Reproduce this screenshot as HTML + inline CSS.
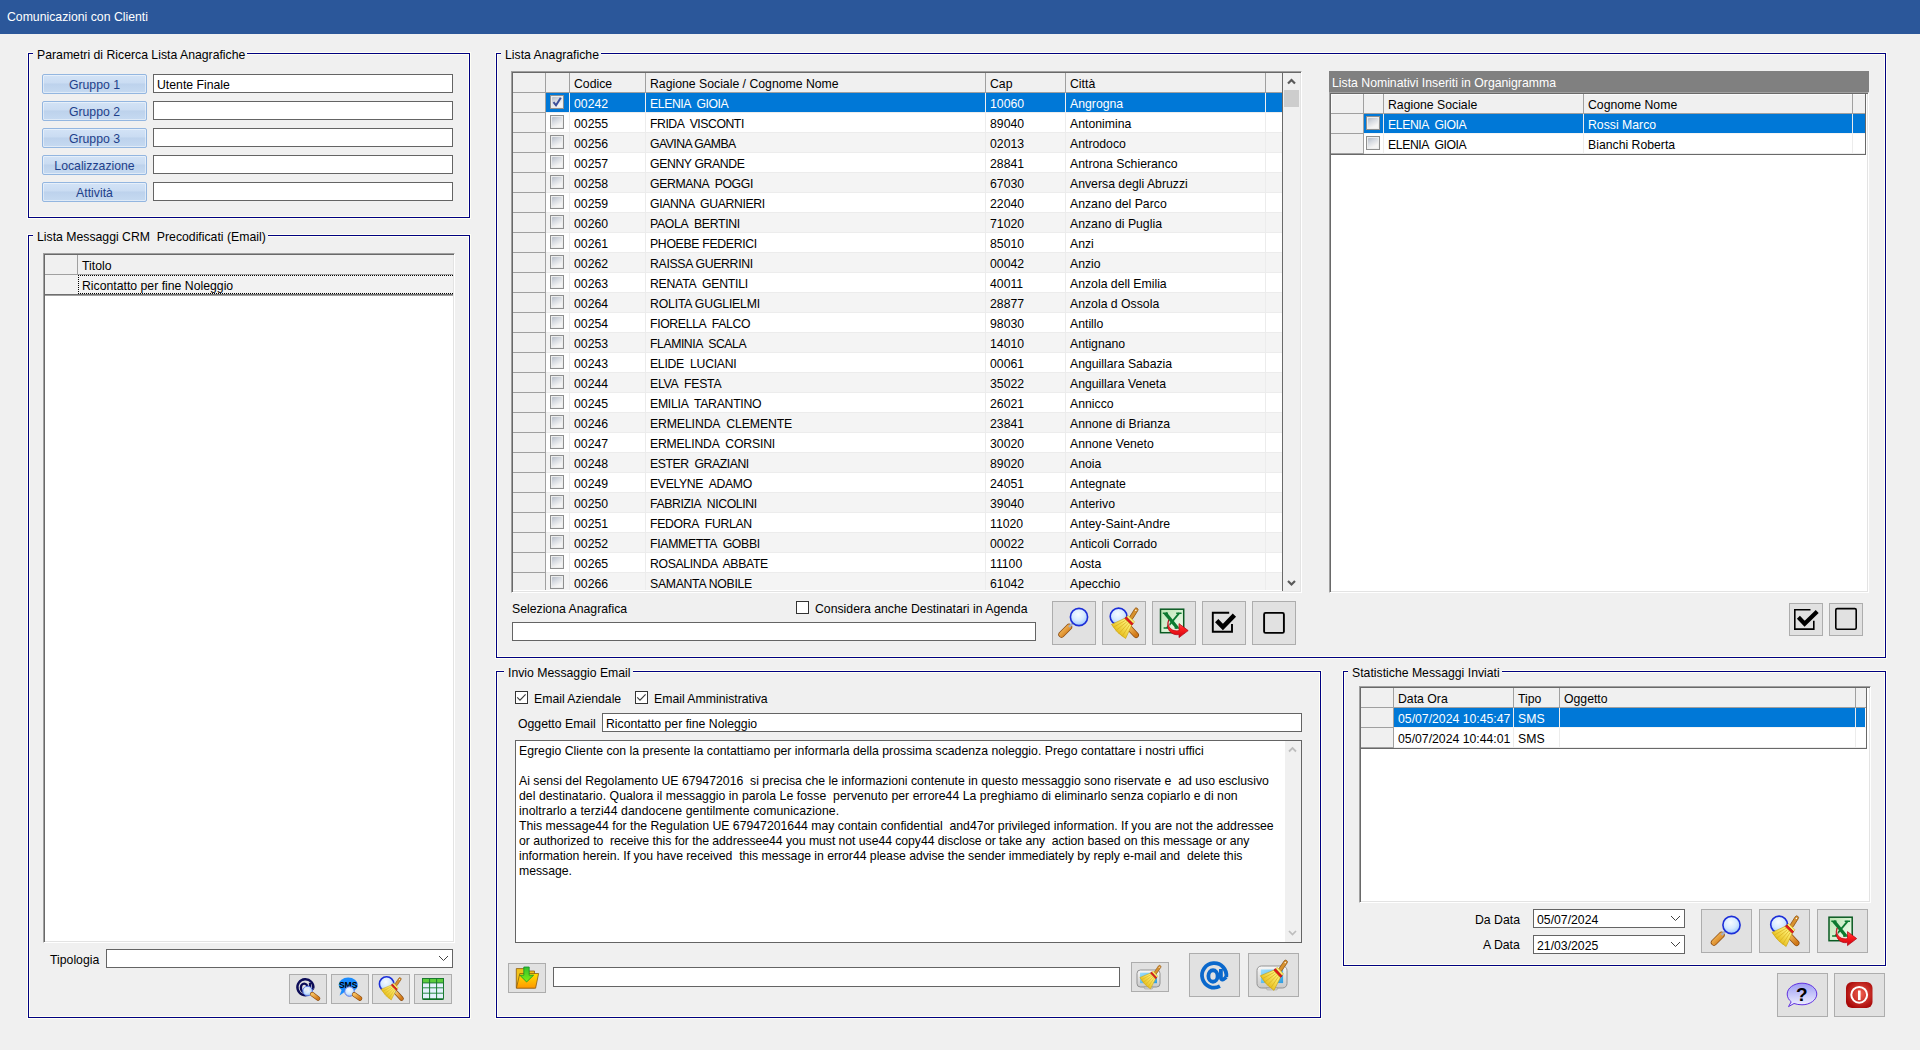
<!DOCTYPE html><html><head><meta charset="utf-8"><style>
html,body{margin:0;padding:0}
body{width:1920px;height:1050px;background:#f0f0f0;position:relative;overflow:hidden;font-family:"Liberation Sans",sans-serif;font-size:12.25px}
.a{position:absolute;box-sizing:border-box}
svg.a{overflow:visible}
.t{position:absolute;white-space:pre;line-height:14px;font-size:12.25px}
.grp{position:absolute;box-sizing:border-box;border:1px solid #000080;box-shadow:0 0 0 1px #fffff6,inset 0 0 0 1px #fffff6}
.gt{position:absolute;background:#f0f0f0;padding:0 2px 0 4px;line-height:14px;white-space:pre;color:#000}
.tb{position:absolute;box-sizing:border-box;background:#fff;border:1px solid #646464}
.btn{position:absolute;box-sizing:border-box;background:#e1e1e1;border:1px solid #adadad}
.bb{position:absolute;box-sizing:border-box;border:1px solid #93b6e0;border-radius:2px;box-shadow:inset 0 0 0 1px rgba(255,255,255,0.45);background:linear-gradient(#d3e3f6 0,#cadcf2 44%,#bdd2ec 50%,#c6daf1 100%);color:#1e3f8a;text-align:center;line-height:20px;font-size:12.25px}
.btn svg{position:absolute}
</style></head><body><svg width="0" height="0" style="position:absolute">
<defs>
<radialGradient id="lens" cx="0.45" cy="0.35" r="0.65"><stop offset="0" stop-color="#f6fbff"/><stop offset="0.55" stop-color="#d6eaff"/><stop offset="1" stop-color="#9cc8ff"/></radialGradient>
<linearGradient id="hand" x1="0" y1="0" x2="1" y2="1"><stop offset="0" stop-color="#f7c060"/><stop offset="1" stop-color="#d07818"/></linearGradient>
<linearGradient id="bristle" x1="0" y1="0" x2="0" y2="1"><stop offset="0" stop-color="#fff27a"/><stop offset="1" stop-color="#e8c020"/></linearGradient>
<linearGradient id="xls" x1="0" y1="0" x2="1" y2="1"><stop offset="0" stop-color="#b8e4b0"/><stop offset="1" stop-color="#f6fff4"/></linearGradient>
<linearGradient id="redarr" x1="0" y1="0" x2="0" y2="1"><stop offset="0" stop-color="#ff8080"/><stop offset="0.5" stop-color="#ff2020"/><stop offset="1" stop-color="#d00010"/></linearGradient>
<linearGradient id="folder" x1="0" y1="0" x2="0" y2="1"><stop offset="0" stop-color="#ffe000"/><stop offset="1" stop-color="#ff9800"/></linearGradient>
<linearGradient id="garr" x1="0" y1="0" x2="0" y2="1"><stop offset="0" stop-color="#30c030"/><stop offset="1" stop-color="#80f010"/></linearGradient>
<linearGradient id="bub" x1="0" y1="0" x2="0" y2="1"><stop offset="0" stop-color="#9c9cf4"/><stop offset="1" stop-color="#f4f4ff"/></linearGradient>
<radialGradient id="pwr" cx="0.55" cy="0.45" r="0.6"><stop offset="0" stop-color="#f06050"/><stop offset="1" stop-color="#a80808"/></radialGradient>
<linearGradient id="mon" x1="0" y1="0" x2="0" y2="1"><stop offset="0" stop-color="#f8f8f8"/><stop offset="1" stop-color="#c8c8c8"/></linearGradient>
<linearGradient id="scr" x1="0" y1="0" x2="1" y2="1"><stop offset="0" stop-color="#9ee0ff"/><stop offset="1" stop-color="#2c9ce0"/></linearGradient>
</defs></svg><div class="a" style="left:0px;top:0px;width:1920px;height:34px;background:#2b579a"></div><div class="t" style="left:7px;top:10px;color:#fff;">Comunicazioni con Clienti</div><div class="grp" style="left:28px;top:53px;width:442px;height:165px"></div><div class="gt" style="left:33px;top:48px">Parametri di Ricerca Lista Anagrafiche</div><div class="bb" style="left:42px;top:74px;width:105px;height:20px">Gruppo 1</div><div class="tb" style="left:153px;top:74px;width:300px;height:19px"></div><div class="bb" style="left:42px;top:101px;width:105px;height:20px">Gruppo 2</div><div class="tb" style="left:153px;top:101px;width:300px;height:19px"></div><div class="bb" style="left:42px;top:128px;width:105px;height:20px">Gruppo 3</div><div class="tb" style="left:153px;top:128px;width:300px;height:19px"></div><div class="bb" style="left:42px;top:155px;width:105px;height:20px">Localizzazione</div><div class="tb" style="left:153px;top:155px;width:300px;height:19px"></div><div class="bb" style="left:42px;top:182px;width:105px;height:20px">Attività</div><div class="tb" style="left:153px;top:182px;width:300px;height:19px"></div><div class="t" style="left:157px;top:78px;color:#000;">Utente Finale</div><div class="grp" style="left:28px;top:235px;width:442px;height:783px"></div><div class="gt" style="left:33px;top:230px">Lista Messaggi CRM  Precodificati (Email)</div><div class="a" style="left:43px;top:253px;width:412px;height:690px;background:#fff;border-style:solid;border-width:1px;border-color:#a0a0a0 #fff #fff #a0a0a0;box-shadow:inset 1px 1px 0 #696969,inset -1px -1px 0 #e3e3e3"></div><div class="a" style="left:45px;top:255px;width:408px;height:20px;background:#f0f0f0"></div><div class="a" style="left:45px;top:274px;width:408px;height:1px;background:#a0a0a0"></div><div class="a" style="left:77px;top:255px;width:1px;height:40px;background:#a0a0a0"></div><div class="t" style="left:82px;top:259px;color:#000;">Titolo</div><div class="a" style="left:45px;top:275px;width:408px;height:19px;background:#f2f2f2"></div><div class="a" style="left:45px;top:294px;width:408px;height:1px;background:#6f6f6f"></div><div class="a" style="left:45px;top:295px;width:408px;height:1px;background:#a0a0a0"></div><div class="a" style="left:78px;top:275px;width:375px;height:19px;border:1px dotted #000;border-right:none;box-sizing:border-box"></div><div class="t" style="left:82px;top:279px;color:#000;">Ricontatto per fine Noleggio</div><div class="t" style="left:50px;top:953px;color:#000;">Tipologia</div><div class="tb" style="left:106px;top:949px;width:347px;height:19px"></div><svg class="a" style="left:437.5px;top:954.75px" width="11" height="6.5" viewBox="-1 -1 11 6.5"><path d="M0 0 L4.5 4.5 L9 0" fill="none" stroke="#404040" stroke-width="1.0"/></svg><div class="grp" style="left:496px;top:53px;width:1390px;height:605px"></div><div class="gt" style="left:501px;top:48px">Lista Anagrafiche</div><div class="a" style="left:511px;top:71px;width:791px;height:522px;background:#fff;border-style:solid;border-width:1px;border-color:#a0a0a0 #fff #fff #a0a0a0;box-shadow:inset 1px 1px 0 #696969,inset -1px -1px 0 #e3e3e3"></div><div class="a" style="left:513px;top:73px;width:770px;height:20px;background:#f0f0f0"></div><div class="a" style="left:513px;top:92px;width:769px;height:1px;background:#a0a0a0"></div><div class="a" style="left:545px;top:73px;width:1px;height:19px;background:#a0a0a0"></div><div class="a" style="left:569px;top:73px;width:1px;height:19px;background:#a0a0a0"></div><div class="a" style="left:645px;top:73px;width:1px;height:19px;background:#a0a0a0"></div><div class="a" style="left:985px;top:73px;width:1px;height:19px;background:#a0a0a0"></div><div class="a" style="left:1065px;top:73px;width:1px;height:19px;background:#a0a0a0"></div><div class="a" style="left:1265px;top:73px;width:1px;height:19px;background:#a0a0a0"></div><div class="t" style="left:574px;top:77px;color:#000;">Codice</div><div class="t" style="left:650px;top:77px;color:#000;">Ragione Sociale / Cognome Nome</div><div class="t" style="left:990px;top:77px;color:#000;">Cap</div><div class="t" style="left:1070px;top:77px;color:#000;">Città</div><div class="a" style="left:0;top:0;width:1920px;height:590px;overflow:hidden"><div class="a" style="left:546px;top:93px;width:736px;height:19px;background:#0078d7"></div><div class="a" style="left:546px;top:112px;width:736px;height:1px;background:#ececec"></div><div class="a" style="left:569px;top:93px;width:1px;height:19px;background:#f0f0f0"></div><div class="a" style="left:645px;top:93px;width:1px;height:19px;background:#f0f0f0"></div><div class="a" style="left:985px;top:93px;width:1px;height:19px;background:#f0f0f0"></div><div class="a" style="left:1065px;top:93px;width:1px;height:19px;background:#f0f0f0"></div><div class="a" style="left:1265px;top:93px;width:1px;height:19px;background:#f0f0f0"></div><div class="a" style="left:513px;top:93px;width:32px;height:19px;background:#f0f0f0"></div><div class="a" style="left:513px;top:112px;width:33px;height:1px;background:#a0a0a0"></div><div class="a" style="left:550px;top:95px;width:14px;height:14px;border:1px solid #8e8f8f;background:#eceded"></div><div class="a" style="left:552px;top:97px;width:10px;height:10px;border-radius:1px;background:linear-gradient(150deg,#b6bdc9 0,#d9dde3 40%,#f3f3f3 75%,#f6f6f6 100%)"></div><svg class="a" style="left:550px;top:95px" width="14" height="14" viewBox="0 0 14 14"><path d="M3.5 7.2 L6 10.3 L10.8 2.8" fill="none" stroke="#3c4f9a" stroke-width="2"/></svg><div class="t" style="left:574px;top:97px;color:#fff;">00242</div><div class="t" style="left:650px;top:97px;color:#fff;letter-spacing:-0.413px;">ELENIA  GIOIA</div><div class="t" style="left:990px;top:97px;color:#fff;">10060</div><div class="t" style="left:1070px;top:97px;color:#fff;">Angrogna</div><div class="a" style="left:546px;top:113px;width:736px;height:19px;background:#ffffff"></div><div class="a" style="left:546px;top:132px;width:736px;height:1px;background:#ececec"></div><div class="a" style="left:569px;top:113px;width:1px;height:19px;background:#ececec"></div><div class="a" style="left:645px;top:113px;width:1px;height:19px;background:#ececec"></div><div class="a" style="left:985px;top:113px;width:1px;height:19px;background:#ececec"></div><div class="a" style="left:1065px;top:113px;width:1px;height:19px;background:#ececec"></div><div class="a" style="left:1265px;top:113px;width:1px;height:19px;background:#ececec"></div><div class="a" style="left:513px;top:113px;width:32px;height:19px;background:#f0f0f0"></div><div class="a" style="left:513px;top:132px;width:33px;height:1px;background:#a0a0a0"></div><div class="a" style="left:550px;top:115px;width:14px;height:14px;border:1px solid #8e8f8f;background:#eceded"></div><div class="a" style="left:552px;top:117px;width:10px;height:10px;border-radius:1px;background:linear-gradient(150deg,#b6bdc9 0,#d9dde3 40%,#f3f3f3 75%,#f6f6f6 100%)"></div><div class="t" style="left:574px;top:117px;color:#000;">00255</div><div class="t" style="left:650px;top:117px;color:#000;letter-spacing:-0.460px;">FRIDA  VISCONTI</div><div class="t" style="left:990px;top:117px;color:#000;">89040</div><div class="t" style="left:1070px;top:117px;color:#000;">Antonimina</div><div class="a" style="left:546px;top:133px;width:736px;height:19px;background:#f4f4f4"></div><div class="a" style="left:546px;top:152px;width:736px;height:1px;background:#ececec"></div><div class="a" style="left:569px;top:133px;width:1px;height:19px;background:#ececec"></div><div class="a" style="left:645px;top:133px;width:1px;height:19px;background:#ececec"></div><div class="a" style="left:985px;top:133px;width:1px;height:19px;background:#ececec"></div><div class="a" style="left:1065px;top:133px;width:1px;height:19px;background:#ececec"></div><div class="a" style="left:1265px;top:133px;width:1px;height:19px;background:#ececec"></div><div class="a" style="left:513px;top:133px;width:32px;height:19px;background:#f0f0f0"></div><div class="a" style="left:513px;top:152px;width:33px;height:1px;background:#a0a0a0"></div><div class="a" style="left:550px;top:135px;width:14px;height:14px;border:1px solid #8e8f8f;background:#eceded"></div><div class="a" style="left:552px;top:137px;width:10px;height:10px;border-radius:1px;background:linear-gradient(150deg,#b6bdc9 0,#d9dde3 40%,#f3f3f3 75%,#f6f6f6 100%)"></div><div class="t" style="left:574px;top:137px;color:#000;">00256</div><div class="t" style="left:650px;top:137px;color:#000;letter-spacing:-0.551px;">GAVINA GAMBA</div><div class="t" style="left:990px;top:137px;color:#000;">02013</div><div class="t" style="left:1070px;top:137px;color:#000;">Antrodoco</div><div class="a" style="left:546px;top:153px;width:736px;height:19px;background:#ffffff"></div><div class="a" style="left:546px;top:172px;width:736px;height:1px;background:#ececec"></div><div class="a" style="left:569px;top:153px;width:1px;height:19px;background:#ececec"></div><div class="a" style="left:645px;top:153px;width:1px;height:19px;background:#ececec"></div><div class="a" style="left:985px;top:153px;width:1px;height:19px;background:#ececec"></div><div class="a" style="left:1065px;top:153px;width:1px;height:19px;background:#ececec"></div><div class="a" style="left:1265px;top:153px;width:1px;height:19px;background:#ececec"></div><div class="a" style="left:513px;top:153px;width:32px;height:19px;background:#f0f0f0"></div><div class="a" style="left:513px;top:172px;width:33px;height:1px;background:#a0a0a0"></div><div class="a" style="left:550px;top:155px;width:14px;height:14px;border:1px solid #8e8f8f;background:#eceded"></div><div class="a" style="left:552px;top:157px;width:10px;height:10px;border-radius:1px;background:linear-gradient(150deg,#b6bdc9 0,#d9dde3 40%,#f3f3f3 75%,#f6f6f6 100%)"></div><div class="t" style="left:574px;top:157px;color:#000;">00257</div><div class="t" style="left:650px;top:157px;color:#000;letter-spacing:-0.387px;">GENNY GRANDE</div><div class="t" style="left:990px;top:157px;color:#000;">28841</div><div class="t" style="left:1070px;top:157px;color:#000;">Antrona Schieranco</div><div class="a" style="left:546px;top:173px;width:736px;height:19px;background:#f4f4f4"></div><div class="a" style="left:546px;top:192px;width:736px;height:1px;background:#ececec"></div><div class="a" style="left:569px;top:173px;width:1px;height:19px;background:#ececec"></div><div class="a" style="left:645px;top:173px;width:1px;height:19px;background:#ececec"></div><div class="a" style="left:985px;top:173px;width:1px;height:19px;background:#ececec"></div><div class="a" style="left:1065px;top:173px;width:1px;height:19px;background:#ececec"></div><div class="a" style="left:1265px;top:173px;width:1px;height:19px;background:#ececec"></div><div class="a" style="left:513px;top:173px;width:32px;height:19px;background:#f0f0f0"></div><div class="a" style="left:513px;top:192px;width:33px;height:1px;background:#a0a0a0"></div><div class="a" style="left:550px;top:175px;width:14px;height:14px;border:1px solid #8e8f8f;background:#eceded"></div><div class="a" style="left:552px;top:177px;width:10px;height:10px;border-radius:1px;background:linear-gradient(150deg,#b6bdc9 0,#d9dde3 40%,#f3f3f3 75%,#f6f6f6 100%)"></div><div class="t" style="left:574px;top:177px;color:#000;">00258</div><div class="t" style="left:650px;top:177px;color:#000;letter-spacing:-0.380px;">GERMANA  POGGI</div><div class="t" style="left:990px;top:177px;color:#000;">67030</div><div class="t" style="left:1070px;top:177px;color:#000;">Anversa degli Abruzzi</div><div class="a" style="left:546px;top:193px;width:736px;height:19px;background:#ffffff"></div><div class="a" style="left:546px;top:212px;width:736px;height:1px;background:#ececec"></div><div class="a" style="left:569px;top:193px;width:1px;height:19px;background:#ececec"></div><div class="a" style="left:645px;top:193px;width:1px;height:19px;background:#ececec"></div><div class="a" style="left:985px;top:193px;width:1px;height:19px;background:#ececec"></div><div class="a" style="left:1065px;top:193px;width:1px;height:19px;background:#ececec"></div><div class="a" style="left:1265px;top:193px;width:1px;height:19px;background:#ececec"></div><div class="a" style="left:513px;top:193px;width:32px;height:19px;background:#f0f0f0"></div><div class="a" style="left:513px;top:212px;width:33px;height:1px;background:#a0a0a0"></div><div class="a" style="left:550px;top:195px;width:14px;height:14px;border:1px solid #8e8f8f;background:#eceded"></div><div class="a" style="left:552px;top:197px;width:10px;height:10px;border-radius:1px;background:linear-gradient(150deg,#b6bdc9 0,#d9dde3 40%,#f3f3f3 75%,#f6f6f6 100%)"></div><div class="t" style="left:574px;top:197px;color:#000;">00259</div><div class="t" style="left:650px;top:197px;color:#000;letter-spacing:-0.373px;">GIANNA  GUARNIERI</div><div class="t" style="left:990px;top:197px;color:#000;">22040</div><div class="t" style="left:1070px;top:197px;color:#000;">Anzano del Parco</div><div class="a" style="left:546px;top:213px;width:736px;height:19px;background:#f4f4f4"></div><div class="a" style="left:546px;top:232px;width:736px;height:1px;background:#ececec"></div><div class="a" style="left:569px;top:213px;width:1px;height:19px;background:#ececec"></div><div class="a" style="left:645px;top:213px;width:1px;height:19px;background:#ececec"></div><div class="a" style="left:985px;top:213px;width:1px;height:19px;background:#ececec"></div><div class="a" style="left:1065px;top:213px;width:1px;height:19px;background:#ececec"></div><div class="a" style="left:1265px;top:213px;width:1px;height:19px;background:#ececec"></div><div class="a" style="left:513px;top:213px;width:32px;height:19px;background:#f0f0f0"></div><div class="a" style="left:513px;top:232px;width:33px;height:1px;background:#a0a0a0"></div><div class="a" style="left:550px;top:215px;width:14px;height:14px;border:1px solid #8e8f8f;background:#eceded"></div><div class="a" style="left:552px;top:217px;width:10px;height:10px;border-radius:1px;background:linear-gradient(150deg,#b6bdc9 0,#d9dde3 40%,#f3f3f3 75%,#f6f6f6 100%)"></div><div class="t" style="left:574px;top:217px;color:#000;">00260</div><div class="t" style="left:650px;top:217px;color:#000;letter-spacing:-0.307px;">PAOLA  BERTINI</div><div class="t" style="left:990px;top:217px;color:#000;">71020</div><div class="t" style="left:1070px;top:217px;color:#000;">Anzano di Puglia</div><div class="a" style="left:546px;top:233px;width:736px;height:19px;background:#ffffff"></div><div class="a" style="left:546px;top:252px;width:736px;height:1px;background:#ececec"></div><div class="a" style="left:569px;top:233px;width:1px;height:19px;background:#ececec"></div><div class="a" style="left:645px;top:233px;width:1px;height:19px;background:#ececec"></div><div class="a" style="left:985px;top:233px;width:1px;height:19px;background:#ececec"></div><div class="a" style="left:1065px;top:233px;width:1px;height:19px;background:#ececec"></div><div class="a" style="left:1265px;top:233px;width:1px;height:19px;background:#ececec"></div><div class="a" style="left:513px;top:233px;width:32px;height:19px;background:#f0f0f0"></div><div class="a" style="left:513px;top:252px;width:33px;height:1px;background:#a0a0a0"></div><div class="a" style="left:550px;top:235px;width:14px;height:14px;border:1px solid #8e8f8f;background:#eceded"></div><div class="a" style="left:552px;top:237px;width:10px;height:10px;border-radius:1px;background:linear-gradient(150deg,#b6bdc9 0,#d9dde3 40%,#f3f3f3 75%,#f6f6f6 100%)"></div><div class="t" style="left:574px;top:237px;color:#000;">00261</div><div class="t" style="left:650px;top:237px;color:#000;letter-spacing:-0.317px;">PHOEBE FEDERICI</div><div class="t" style="left:990px;top:237px;color:#000;">85010</div><div class="t" style="left:1070px;top:237px;color:#000;">Anzi</div><div class="a" style="left:546px;top:253px;width:736px;height:19px;background:#f4f4f4"></div><div class="a" style="left:546px;top:272px;width:736px;height:1px;background:#ececec"></div><div class="a" style="left:569px;top:253px;width:1px;height:19px;background:#ececec"></div><div class="a" style="left:645px;top:253px;width:1px;height:19px;background:#ececec"></div><div class="a" style="left:985px;top:253px;width:1px;height:19px;background:#ececec"></div><div class="a" style="left:1065px;top:253px;width:1px;height:19px;background:#ececec"></div><div class="a" style="left:1265px;top:253px;width:1px;height:19px;background:#ececec"></div><div class="a" style="left:513px;top:253px;width:32px;height:19px;background:#f0f0f0"></div><div class="a" style="left:513px;top:272px;width:33px;height:1px;background:#a0a0a0"></div><div class="a" style="left:550px;top:255px;width:14px;height:14px;border:1px solid #8e8f8f;background:#eceded"></div><div class="a" style="left:552px;top:257px;width:10px;height:10px;border-radius:1px;background:linear-gradient(150deg,#b6bdc9 0,#d9dde3 40%,#f3f3f3 75%,#f6f6f6 100%)"></div><div class="t" style="left:574px;top:257px;color:#000;">00262</div><div class="t" style="left:650px;top:257px;color:#000;letter-spacing:-0.312px;">RAISSA GUERRINI</div><div class="t" style="left:990px;top:257px;color:#000;">00042</div><div class="t" style="left:1070px;top:257px;color:#000;">Anzio</div><div class="a" style="left:546px;top:273px;width:736px;height:19px;background:#ffffff"></div><div class="a" style="left:546px;top:292px;width:736px;height:1px;background:#ececec"></div><div class="a" style="left:569px;top:273px;width:1px;height:19px;background:#ececec"></div><div class="a" style="left:645px;top:273px;width:1px;height:19px;background:#ececec"></div><div class="a" style="left:985px;top:273px;width:1px;height:19px;background:#ececec"></div><div class="a" style="left:1065px;top:273px;width:1px;height:19px;background:#ececec"></div><div class="a" style="left:1265px;top:273px;width:1px;height:19px;background:#ececec"></div><div class="a" style="left:513px;top:273px;width:32px;height:19px;background:#f0f0f0"></div><div class="a" style="left:513px;top:292px;width:33px;height:1px;background:#a0a0a0"></div><div class="a" style="left:550px;top:275px;width:14px;height:14px;border:1px solid #8e8f8f;background:#eceded"></div><div class="a" style="left:552px;top:277px;width:10px;height:10px;border-radius:1px;background:linear-gradient(150deg,#b6bdc9 0,#d9dde3 40%,#f3f3f3 75%,#f6f6f6 100%)"></div><div class="t" style="left:574px;top:277px;color:#000;">00263</div><div class="t" style="left:650px;top:277px;color:#000;letter-spacing:-0.247px;">RENATA  GENTILI</div><div class="t" style="left:990px;top:277px;color:#000;">40011</div><div class="t" style="left:1070px;top:277px;color:#000;">Anzola dell Emilia</div><div class="a" style="left:546px;top:293px;width:736px;height:19px;background:#f4f4f4"></div><div class="a" style="left:546px;top:312px;width:736px;height:1px;background:#ececec"></div><div class="a" style="left:569px;top:293px;width:1px;height:19px;background:#ececec"></div><div class="a" style="left:645px;top:293px;width:1px;height:19px;background:#ececec"></div><div class="a" style="left:985px;top:293px;width:1px;height:19px;background:#ececec"></div><div class="a" style="left:1065px;top:293px;width:1px;height:19px;background:#ececec"></div><div class="a" style="left:1265px;top:293px;width:1px;height:19px;background:#ececec"></div><div class="a" style="left:513px;top:293px;width:32px;height:19px;background:#f0f0f0"></div><div class="a" style="left:513px;top:312px;width:33px;height:1px;background:#a0a0a0"></div><div class="a" style="left:550px;top:295px;width:14px;height:14px;border:1px solid #8e8f8f;background:#eceded"></div><div class="a" style="left:552px;top:297px;width:10px;height:10px;border-radius:1px;background:linear-gradient(150deg,#b6bdc9 0,#d9dde3 40%,#f3f3f3 75%,#f6f6f6 100%)"></div><div class="t" style="left:574px;top:297px;color:#000;">00264</div><div class="t" style="left:650px;top:297px;color:#000;letter-spacing:-0.172px;">ROLITA GUGLIELMI</div><div class="t" style="left:990px;top:297px;color:#000;">28877</div><div class="t" style="left:1070px;top:297px;color:#000;">Anzola d Ossola</div><div class="a" style="left:546px;top:313px;width:736px;height:19px;background:#ffffff"></div><div class="a" style="left:546px;top:332px;width:736px;height:1px;background:#ececec"></div><div class="a" style="left:569px;top:313px;width:1px;height:19px;background:#ececec"></div><div class="a" style="left:645px;top:313px;width:1px;height:19px;background:#ececec"></div><div class="a" style="left:985px;top:313px;width:1px;height:19px;background:#ececec"></div><div class="a" style="left:1065px;top:313px;width:1px;height:19px;background:#ececec"></div><div class="a" style="left:1265px;top:313px;width:1px;height:19px;background:#ececec"></div><div class="a" style="left:513px;top:313px;width:32px;height:19px;background:#f0f0f0"></div><div class="a" style="left:513px;top:332px;width:33px;height:1px;background:#a0a0a0"></div><div class="a" style="left:550px;top:315px;width:14px;height:14px;border:1px solid #8e8f8f;background:#eceded"></div><div class="a" style="left:552px;top:317px;width:10px;height:10px;border-radius:1px;background:linear-gradient(150deg,#b6bdc9 0,#d9dde3 40%,#f3f3f3 75%,#f6f6f6 100%)"></div><div class="t" style="left:574px;top:317px;color:#000;">00254</div><div class="t" style="left:650px;top:317px;color:#000;letter-spacing:-0.352px;">FIORELLA  FALCO</div><div class="t" style="left:990px;top:317px;color:#000;">98030</div><div class="t" style="left:1070px;top:317px;color:#000;">Antillo</div><div class="a" style="left:546px;top:333px;width:736px;height:19px;background:#f4f4f4"></div><div class="a" style="left:546px;top:352px;width:736px;height:1px;background:#ececec"></div><div class="a" style="left:569px;top:333px;width:1px;height:19px;background:#ececec"></div><div class="a" style="left:645px;top:333px;width:1px;height:19px;background:#ececec"></div><div class="a" style="left:985px;top:333px;width:1px;height:19px;background:#ececec"></div><div class="a" style="left:1065px;top:333px;width:1px;height:19px;background:#ececec"></div><div class="a" style="left:1265px;top:333px;width:1px;height:19px;background:#ececec"></div><div class="a" style="left:513px;top:333px;width:32px;height:19px;background:#f0f0f0"></div><div class="a" style="left:513px;top:352px;width:33px;height:1px;background:#a0a0a0"></div><div class="a" style="left:550px;top:335px;width:14px;height:14px;border:1px solid #8e8f8f;background:#eceded"></div><div class="a" style="left:552px;top:337px;width:10px;height:10px;border-radius:1px;background:linear-gradient(150deg,#b6bdc9 0,#d9dde3 40%,#f3f3f3 75%,#f6f6f6 100%)"></div><div class="t" style="left:574px;top:337px;color:#000;">00253</div><div class="t" style="left:650px;top:337px;color:#000;letter-spacing:-0.444px;">FLAMINIA  SCALA</div><div class="t" style="left:990px;top:337px;color:#000;">14010</div><div class="t" style="left:1070px;top:337px;color:#000;">Antignano</div><div class="a" style="left:546px;top:353px;width:736px;height:19px;background:#ffffff"></div><div class="a" style="left:546px;top:372px;width:736px;height:1px;background:#ececec"></div><div class="a" style="left:569px;top:353px;width:1px;height:19px;background:#ececec"></div><div class="a" style="left:645px;top:353px;width:1px;height:19px;background:#ececec"></div><div class="a" style="left:985px;top:353px;width:1px;height:19px;background:#ececec"></div><div class="a" style="left:1065px;top:353px;width:1px;height:19px;background:#ececec"></div><div class="a" style="left:1265px;top:353px;width:1px;height:19px;background:#ececec"></div><div class="a" style="left:513px;top:353px;width:32px;height:19px;background:#f0f0f0"></div><div class="a" style="left:513px;top:372px;width:33px;height:1px;background:#a0a0a0"></div><div class="a" style="left:550px;top:355px;width:14px;height:14px;border:1px solid #8e8f8f;background:#eceded"></div><div class="a" style="left:552px;top:357px;width:10px;height:10px;border-radius:1px;background:linear-gradient(150deg,#b6bdc9 0,#d9dde3 40%,#f3f3f3 75%,#f6f6f6 100%)"></div><div class="t" style="left:574px;top:357px;color:#000;">00243</div><div class="t" style="left:650px;top:357px;color:#000;letter-spacing:-0.304px;">ELIDE  LUCIANI</div><div class="t" style="left:990px;top:357px;color:#000;">00061</div><div class="t" style="left:1070px;top:357px;color:#000;">Anguillara Sabazia</div><div class="a" style="left:546px;top:373px;width:736px;height:19px;background:#f4f4f4"></div><div class="a" style="left:546px;top:392px;width:736px;height:1px;background:#ececec"></div><div class="a" style="left:569px;top:373px;width:1px;height:19px;background:#ececec"></div><div class="a" style="left:645px;top:373px;width:1px;height:19px;background:#ececec"></div><div class="a" style="left:985px;top:373px;width:1px;height:19px;background:#ececec"></div><div class="a" style="left:1065px;top:373px;width:1px;height:19px;background:#ececec"></div><div class="a" style="left:1265px;top:373px;width:1px;height:19px;background:#ececec"></div><div class="a" style="left:513px;top:373px;width:32px;height:19px;background:#f0f0f0"></div><div class="a" style="left:513px;top:392px;width:33px;height:1px;background:#a0a0a0"></div><div class="a" style="left:550px;top:375px;width:14px;height:14px;border:1px solid #8e8f8f;background:#eceded"></div><div class="a" style="left:552px;top:377px;width:10px;height:10px;border-radius:1px;background:linear-gradient(150deg,#b6bdc9 0,#d9dde3 40%,#f3f3f3 75%,#f6f6f6 100%)"></div><div class="t" style="left:574px;top:377px;color:#000;">00244</div><div class="t" style="left:650px;top:377px;color:#000;letter-spacing:-0.262px;">ELVA  FESTA</div><div class="t" style="left:990px;top:377px;color:#000;">35022</div><div class="t" style="left:1070px;top:377px;color:#000;">Anguillara Veneta</div><div class="a" style="left:546px;top:393px;width:736px;height:19px;background:#ffffff"></div><div class="a" style="left:546px;top:412px;width:736px;height:1px;background:#ececec"></div><div class="a" style="left:569px;top:393px;width:1px;height:19px;background:#ececec"></div><div class="a" style="left:645px;top:393px;width:1px;height:19px;background:#ececec"></div><div class="a" style="left:985px;top:393px;width:1px;height:19px;background:#ececec"></div><div class="a" style="left:1065px;top:393px;width:1px;height:19px;background:#ececec"></div><div class="a" style="left:1265px;top:393px;width:1px;height:19px;background:#ececec"></div><div class="a" style="left:513px;top:393px;width:32px;height:19px;background:#f0f0f0"></div><div class="a" style="left:513px;top:412px;width:33px;height:1px;background:#a0a0a0"></div><div class="a" style="left:550px;top:395px;width:14px;height:14px;border:1px solid #8e8f8f;background:#eceded"></div><div class="a" style="left:552px;top:397px;width:10px;height:10px;border-radius:1px;background:linear-gradient(150deg,#b6bdc9 0,#d9dde3 40%,#f3f3f3 75%,#f6f6f6 100%)"></div><div class="t" style="left:574px;top:397px;color:#000;">00245</div><div class="t" style="left:650px;top:397px;color:#000;letter-spacing:-0.272px;">EMILIA  TARANTINO</div><div class="t" style="left:990px;top:397px;color:#000;">26021</div><div class="t" style="left:1070px;top:397px;color:#000;">Annicco</div><div class="a" style="left:546px;top:413px;width:736px;height:19px;background:#f4f4f4"></div><div class="a" style="left:546px;top:432px;width:736px;height:1px;background:#ececec"></div><div class="a" style="left:569px;top:413px;width:1px;height:19px;background:#ececec"></div><div class="a" style="left:645px;top:413px;width:1px;height:19px;background:#ececec"></div><div class="a" style="left:985px;top:413px;width:1px;height:19px;background:#ececec"></div><div class="a" style="left:1065px;top:413px;width:1px;height:19px;background:#ececec"></div><div class="a" style="left:1265px;top:413px;width:1px;height:19px;background:#ececec"></div><div class="a" style="left:513px;top:413px;width:32px;height:19px;background:#f0f0f0"></div><div class="a" style="left:513px;top:432px;width:33px;height:1px;background:#a0a0a0"></div><div class="a" style="left:550px;top:415px;width:14px;height:14px;border:1px solid #8e8f8f;background:#eceded"></div><div class="a" style="left:552px;top:417px;width:10px;height:10px;border-radius:1px;background:linear-gradient(150deg,#b6bdc9 0,#d9dde3 40%,#f3f3f3 75%,#f6f6f6 100%)"></div><div class="t" style="left:574px;top:417px;color:#000;">00246</div><div class="t" style="left:650px;top:417px;color:#000;letter-spacing:-0.117px;">ERMELINDA  CLEMENTE</div><div class="t" style="left:990px;top:417px;color:#000;">23841</div><div class="t" style="left:1070px;top:417px;color:#000;">Annone di Brianza</div><div class="a" style="left:546px;top:433px;width:736px;height:19px;background:#ffffff"></div><div class="a" style="left:546px;top:452px;width:736px;height:1px;background:#ececec"></div><div class="a" style="left:569px;top:433px;width:1px;height:19px;background:#ececec"></div><div class="a" style="left:645px;top:433px;width:1px;height:19px;background:#ececec"></div><div class="a" style="left:985px;top:433px;width:1px;height:19px;background:#ececec"></div><div class="a" style="left:1065px;top:433px;width:1px;height:19px;background:#ececec"></div><div class="a" style="left:1265px;top:433px;width:1px;height:19px;background:#ececec"></div><div class="a" style="left:513px;top:433px;width:32px;height:19px;background:#f0f0f0"></div><div class="a" style="left:513px;top:452px;width:33px;height:1px;background:#a0a0a0"></div><div class="a" style="left:550px;top:435px;width:14px;height:14px;border:1px solid #8e8f8f;background:#eceded"></div><div class="a" style="left:552px;top:437px;width:10px;height:10px;border-radius:1px;background:linear-gradient(150deg,#b6bdc9 0,#d9dde3 40%,#f3f3f3 75%,#f6f6f6 100%)"></div><div class="t" style="left:574px;top:437px;color:#000;">00247</div><div class="t" style="left:650px;top:437px;color:#000;letter-spacing:-0.203px;">ERMELINDA  CORSINI</div><div class="t" style="left:990px;top:437px;color:#000;">30020</div><div class="t" style="left:1070px;top:437px;color:#000;">Annone Veneto</div><div class="a" style="left:546px;top:453px;width:736px;height:19px;background:#f4f4f4"></div><div class="a" style="left:546px;top:472px;width:736px;height:1px;background:#ececec"></div><div class="a" style="left:569px;top:453px;width:1px;height:19px;background:#ececec"></div><div class="a" style="left:645px;top:453px;width:1px;height:19px;background:#ececec"></div><div class="a" style="left:985px;top:453px;width:1px;height:19px;background:#ececec"></div><div class="a" style="left:1065px;top:453px;width:1px;height:19px;background:#ececec"></div><div class="a" style="left:1265px;top:453px;width:1px;height:19px;background:#ececec"></div><div class="a" style="left:513px;top:453px;width:32px;height:19px;background:#f0f0f0"></div><div class="a" style="left:513px;top:472px;width:33px;height:1px;background:#a0a0a0"></div><div class="a" style="left:550px;top:455px;width:14px;height:14px;border:1px solid #8e8f8f;background:#eceded"></div><div class="a" style="left:552px;top:457px;width:10px;height:10px;border-radius:1px;background:linear-gradient(150deg,#b6bdc9 0,#d9dde3 40%,#f3f3f3 75%,#f6f6f6 100%)"></div><div class="t" style="left:574px;top:457px;color:#000;">00248</div><div class="t" style="left:650px;top:457px;color:#000;letter-spacing:-0.451px;">ESTER  GRAZIANI</div><div class="t" style="left:990px;top:457px;color:#000;">89020</div><div class="t" style="left:1070px;top:457px;color:#000;">Anoia</div><div class="a" style="left:546px;top:473px;width:736px;height:19px;background:#ffffff"></div><div class="a" style="left:546px;top:492px;width:736px;height:1px;background:#ececec"></div><div class="a" style="left:569px;top:473px;width:1px;height:19px;background:#ececec"></div><div class="a" style="left:645px;top:473px;width:1px;height:19px;background:#ececec"></div><div class="a" style="left:985px;top:473px;width:1px;height:19px;background:#ececec"></div><div class="a" style="left:1065px;top:473px;width:1px;height:19px;background:#ececec"></div><div class="a" style="left:1265px;top:473px;width:1px;height:19px;background:#ececec"></div><div class="a" style="left:513px;top:473px;width:32px;height:19px;background:#f0f0f0"></div><div class="a" style="left:513px;top:492px;width:33px;height:1px;background:#a0a0a0"></div><div class="a" style="left:550px;top:475px;width:14px;height:14px;border:1px solid #8e8f8f;background:#eceded"></div><div class="a" style="left:552px;top:477px;width:10px;height:10px;border-radius:1px;background:linear-gradient(150deg,#b6bdc9 0,#d9dde3 40%,#f3f3f3 75%,#f6f6f6 100%)"></div><div class="t" style="left:574px;top:477px;color:#000;">00249</div><div class="t" style="left:650px;top:477px;color:#000;letter-spacing:-0.343px;">EVELYNE  ADAMO</div><div class="t" style="left:990px;top:477px;color:#000;">24051</div><div class="t" style="left:1070px;top:477px;color:#000;">Antegnate</div><div class="a" style="left:546px;top:493px;width:736px;height:19px;background:#f4f4f4"></div><div class="a" style="left:546px;top:512px;width:736px;height:1px;background:#ececec"></div><div class="a" style="left:569px;top:493px;width:1px;height:19px;background:#ececec"></div><div class="a" style="left:645px;top:493px;width:1px;height:19px;background:#ececec"></div><div class="a" style="left:985px;top:493px;width:1px;height:19px;background:#ececec"></div><div class="a" style="left:1065px;top:493px;width:1px;height:19px;background:#ececec"></div><div class="a" style="left:1265px;top:493px;width:1px;height:19px;background:#ececec"></div><div class="a" style="left:513px;top:493px;width:32px;height:19px;background:#f0f0f0"></div><div class="a" style="left:513px;top:512px;width:33px;height:1px;background:#a0a0a0"></div><div class="a" style="left:550px;top:495px;width:14px;height:14px;border:1px solid #8e8f8f;background:#eceded"></div><div class="a" style="left:552px;top:497px;width:10px;height:10px;border-radius:1px;background:linear-gradient(150deg,#b6bdc9 0,#d9dde3 40%,#f3f3f3 75%,#f6f6f6 100%)"></div><div class="t" style="left:574px;top:497px;color:#000;">00250</div><div class="t" style="left:650px;top:497px;color:#000;letter-spacing:-0.382px;">FABRIZIA  NICOLINI</div><div class="t" style="left:990px;top:497px;color:#000;">39040</div><div class="t" style="left:1070px;top:497px;color:#000;">Anterivo</div><div class="a" style="left:546px;top:513px;width:736px;height:19px;background:#ffffff"></div><div class="a" style="left:546px;top:532px;width:736px;height:1px;background:#ececec"></div><div class="a" style="left:569px;top:513px;width:1px;height:19px;background:#ececec"></div><div class="a" style="left:645px;top:513px;width:1px;height:19px;background:#ececec"></div><div class="a" style="left:985px;top:513px;width:1px;height:19px;background:#ececec"></div><div class="a" style="left:1065px;top:513px;width:1px;height:19px;background:#ececec"></div><div class="a" style="left:1265px;top:513px;width:1px;height:19px;background:#ececec"></div><div class="a" style="left:513px;top:513px;width:32px;height:19px;background:#f0f0f0"></div><div class="a" style="left:513px;top:532px;width:33px;height:1px;background:#a0a0a0"></div><div class="a" style="left:550px;top:515px;width:14px;height:14px;border:1px solid #8e8f8f;background:#eceded"></div><div class="a" style="left:552px;top:517px;width:10px;height:10px;border-radius:1px;background:linear-gradient(150deg,#b6bdc9 0,#d9dde3 40%,#f3f3f3 75%,#f6f6f6 100%)"></div><div class="t" style="left:574px;top:517px;color:#000;">00251</div><div class="t" style="left:650px;top:517px;color:#000;letter-spacing:-0.307px;">FEDORA  FURLAN</div><div class="t" style="left:990px;top:517px;color:#000;">11020</div><div class="t" style="left:1070px;top:517px;color:#000;">Antey-Saint-Andre</div><div class="a" style="left:546px;top:533px;width:736px;height:19px;background:#f4f4f4"></div><div class="a" style="left:546px;top:552px;width:736px;height:1px;background:#ececec"></div><div class="a" style="left:569px;top:533px;width:1px;height:19px;background:#ececec"></div><div class="a" style="left:645px;top:533px;width:1px;height:19px;background:#ececec"></div><div class="a" style="left:985px;top:533px;width:1px;height:19px;background:#ececec"></div><div class="a" style="left:1065px;top:533px;width:1px;height:19px;background:#ececec"></div><div class="a" style="left:1265px;top:533px;width:1px;height:19px;background:#ececec"></div><div class="a" style="left:513px;top:533px;width:32px;height:19px;background:#f0f0f0"></div><div class="a" style="left:513px;top:552px;width:33px;height:1px;background:#a0a0a0"></div><div class="a" style="left:550px;top:535px;width:14px;height:14px;border:1px solid #8e8f8f;background:#eceded"></div><div class="a" style="left:552px;top:537px;width:10px;height:10px;border-radius:1px;background:linear-gradient(150deg,#b6bdc9 0,#d9dde3 40%,#f3f3f3 75%,#f6f6f6 100%)"></div><div class="t" style="left:574px;top:537px;color:#000;">00252</div><div class="t" style="left:650px;top:537px;color:#000;letter-spacing:-0.306px;">FIAMMETTA  GOBBI</div><div class="t" style="left:990px;top:537px;color:#000;">00022</div><div class="t" style="left:1070px;top:537px;color:#000;">Anticoli Corrado</div><div class="a" style="left:546px;top:553px;width:736px;height:19px;background:#ffffff"></div><div class="a" style="left:546px;top:572px;width:736px;height:1px;background:#ececec"></div><div class="a" style="left:569px;top:553px;width:1px;height:19px;background:#ececec"></div><div class="a" style="left:645px;top:553px;width:1px;height:19px;background:#ececec"></div><div class="a" style="left:985px;top:553px;width:1px;height:19px;background:#ececec"></div><div class="a" style="left:1065px;top:553px;width:1px;height:19px;background:#ececec"></div><div class="a" style="left:1265px;top:553px;width:1px;height:19px;background:#ececec"></div><div class="a" style="left:513px;top:553px;width:32px;height:19px;background:#f0f0f0"></div><div class="a" style="left:513px;top:572px;width:33px;height:1px;background:#a0a0a0"></div><div class="a" style="left:550px;top:555px;width:14px;height:14px;border:1px solid #8e8f8f;background:#eceded"></div><div class="a" style="left:552px;top:557px;width:10px;height:10px;border-radius:1px;background:linear-gradient(150deg,#b6bdc9 0,#d9dde3 40%,#f3f3f3 75%,#f6f6f6 100%)"></div><div class="t" style="left:574px;top:557px;color:#000;">00265</div><div class="t" style="left:650px;top:557px;color:#000;letter-spacing:-0.343px;">ROSALINDA  ABBATE</div><div class="t" style="left:990px;top:557px;color:#000;">11100</div><div class="t" style="left:1070px;top:557px;color:#000;">Aosta</div><div class="a" style="left:546px;top:573px;width:736px;height:17px;background:#f4f4f4"></div><div class="a" style="left:569px;top:573px;width:1px;height:17px;background:#ececec"></div><div class="a" style="left:645px;top:573px;width:1px;height:17px;background:#ececec"></div><div class="a" style="left:985px;top:573px;width:1px;height:17px;background:#ececec"></div><div class="a" style="left:1065px;top:573px;width:1px;height:17px;background:#ececec"></div><div class="a" style="left:1265px;top:573px;width:1px;height:17px;background:#ececec"></div><div class="a" style="left:513px;top:573px;width:32px;height:17px;background:#f0f0f0"></div><div class="a" style="left:550px;top:575px;width:14px;height:14px;border:1px solid #8e8f8f;background:#eceded"></div><div class="a" style="left:552px;top:577px;width:10px;height:10px;border-radius:1px;background:linear-gradient(150deg,#b6bdc9 0,#d9dde3 40%,#f3f3f3 75%,#f6f6f6 100%)"></div><div class="t" style="left:574px;top:577px;color:#000;">00266</div><div class="t" style="left:650px;top:577px;color:#000;letter-spacing:-0.290px;">SAMANTA NOBILE</div><div class="t" style="left:990px;top:577px;color:#000;">61042</div><div class="t" style="left:1070px;top:577px;color:#000;">Apecchio</div></div><div class="a" style="left:545px;top:93px;width:1px;height:497px;background:#a0a0a0"></div><div class="a" style="left:1282px;top:73px;width:1px;height:518px;background:#696969"></div><div class="a" style="left:1283px;top:73px;width:17px;height:518px;background:#f0f0f0"></div><div class="a" style="left:1284px;top:90px;width:15px;height:17px;background:#cdcdcd"></div><svg class="a" style="left:1287.0px;top:79.25px" width="9" height="5.5" viewBox="-1 -1 9 5.5"><path d="M0 3.5 L3.5 0 L7 3.5" fill="none" stroke="#5a5a5a" stroke-width="2.2"/></svg><svg class="a" style="left:1287.0px;top:580.25px" width="9" height="5.5" viewBox="-1 -1 9 5.5"><path d="M0 0 L3.5 3.5 L7 0" fill="none" stroke="#5a5a5a" stroke-width="2.2"/></svg><div class="t" style="left:512px;top:602px;color:#000;">Seleziona Anagrafica</div><div class="tb" style="left:512px;top:622px;width:524px;height:19px"></div><div class="a" style="left:796px;top:601px;width:13px;height:13px;border:1px solid #333;background:#fff"></div><div class="t" style="left:815px;top:602px;color:#000;">Considera anche Destinatari in Agenda</div><div class="btn" style="left:1052px;top:601px;width:44px;height:44px"></div><svg class="a" style="left:1052px;top:601px" width="44" height="44" viewBox="0 0 44 44"><g transform="translate(6.0 6.0)"><line x1="3.5" y1="27.5" x2="11" y2="20" stroke="#8a4a10" stroke-width="6.4" stroke-linecap="round"/><line x1="3.5" y1="27.5" x2="11" y2="20" stroke="url(#hand)" stroke-width="5" stroke-linecap="round"/><line x1="11" y1="20" x2="14.918881681795693" y2="16.081118318204307" stroke="#a8b0c0" stroke-width="2.4"/><circle cx="21" cy="10" r="8.6" fill="url(#lens)" stroke="#1c2ed8" stroke-width="1.6"/></g></svg><div class="btn" style="left:1102px;top:601px;width:44px;height:44px"></div><svg class="a" style="left:1102px;top:601px" width="44" height="44" viewBox="0 0 44 44"><g transform="translate(6.0 6.0)"><line x1="28" y1="28" x2="20" y2="19.5" stroke="#8a4a10" stroke-width="5.9" stroke-linecap="round"/><line x1="28" y1="28" x2="20" y2="19.5" stroke="url(#hand)" stroke-width="4.5" stroke-linecap="round"/><line x1="20" y1="19.5" x2="16.35324407365025" y2="15.620472418776862" stroke="#a8b0c0" stroke-width="2.4"/><circle cx="10.6" cy="9.5" r="8.4" fill="url(#lens)" stroke="#1c2ed8" stroke-width="1.6"/><g transform="translate(21.5 13.5) scale(1.0)"><g transform="rotate(32)"><rect x="-1.8" y="-14.5" width="3.6" height="13" rx="1.8" fill="#d8922e" stroke="#8a5010" stroke-width="0.7"/><circle cx="0" cy="-12" r="0.7" fill="#fff"/></g><g transform="rotate(45)"><rect x="-4.6" y="-2.6" width="9.2" height="2.4" fill="#fff070" stroke="#c8a020" stroke-width="0.5"/><rect x="-5" y="-0.4" width="10" height="2.6" fill="#e01818" stroke="#900" stroke-width="0.5"/><path d="M-5 2.2 L5 2.2 L10 15.5 Q0 18 -10 15.5 Z" fill="url(#bristle)" stroke="#c8a010" stroke-width="0.6"/><path d="M-3 2.8 L-6.5 16 M-1 2.8 L-2.5 17 M1 2.8 L1.8 17 M3 2.8 L6 16.3" stroke="#d8b020" stroke-width="0.7" fill="none"/></g></g></g></svg><div class="btn" style="left:1152px;top:601px;width:44px;height:44px"></div><svg class="a" style="left:1152px;top:601px" width="44" height="44" viewBox="0 0 44 44"><g transform="translate(6.0 6.0)"><rect x="2.5" y="2.2" width="23.2" height="23.5" fill="url(#xls)" stroke="#0a5a22" stroke-width="1.5"/><path d="M7.2 6.2 L19.4 21" stroke="#0c7a30" stroke-width="3.4" fill="none"/><path d="M21.2 6.2 L8.8 21" stroke="#0c7a30" stroke-width="1.9" fill="none"/><path d="M4.8 6.2 L10 6.2 M18.2 6.2 L23.6 6.2 M5.6 21 L11 21 M16.6 21 L22 21" stroke="#0c7a30" stroke-width="1.6" fill="none"/><path d="M10.6 12.8 C9 21.5 15 24.6 21 23.6 L21 16.6 L30.2 23.6 L21 30.6 L21 27.6 C13 28.8 7.2 22 10.6 12.8 Z" fill="url(#redarr)" stroke="#b00010" stroke-width="0.7"/><path d="M11 15.5 C10.6 21 15 23.2 20 22.6" fill="none" stroke="#ffd0d0" stroke-width="0.9" opacity="0.8"/></g></svg><div class="btn" style="left:1202px;top:601px;width:44px;height:44px"></div><svg class="a" style="left:1202px;top:601px" width="44" height="44" viewBox="0 0 44 44"><path d="M27.2 11.8 L10.8 11.8 L10.8 30.8 L30 30.8 L30 23" fill="none" stroke="#000" stroke-width="1.9"/><path d="M14.7 19.6 L20.9 26 L32.4 14.2" fill="none" stroke="#000" stroke-width="4.6"/></svg><div class="btn" style="left:1252px;top:601px;width:44px;height:44px"></div><svg class="a" style="left:1252px;top:601px" width="44" height="44" viewBox="0 0 44 44"><rect x="12.1" y="11.9" width="19.8" height="20" rx="1.5" fill="none" stroke="#000" stroke-width="1.9"/></svg><div class="a" style="left:1329px;top:71px;width:540px;height:21px;background:#808080"></div><div class="t" style="left:1332px;top:76px;color:#fff;">Lista Nominativi Inseriti in Organigramma</div><div class="a" style="left:1329px;top:92px;width:540px;height:501px;background:#fff;border-style:solid;border-width:1px;border-color:#a0a0a0 #fff #fff #a0a0a0;box-shadow:inset 1px 1px 0 #696969,inset -1px -1px 0 #e3e3e3"></div><div class="a" style="left:1331px;top:94px;width:535px;height:20px;background:#f0f0f0"></div><div class="a" style="left:1331px;top:94px;width:534px;height:1px;background:#fafafa"></div><div class="a" style="left:1331px;top:94px;width:1px;height:20px;background:#fafafa"></div><div class="a" style="left:1331px;top:113px;width:534px;height:1px;background:#a0a0a0"></div><div class="a" style="left:1363px;top:94px;width:1px;height:19px;background:#a0a0a0"></div><div class="a" style="left:1383px;top:94px;width:1px;height:19px;background:#a0a0a0"></div><div class="a" style="left:1583px;top:94px;width:1px;height:19px;background:#a0a0a0"></div><div class="a" style="left:1852px;top:94px;width:1px;height:19px;background:#a0a0a0"></div><div class="t" style="left:1388px;top:98px;color:#000;">Ragione Sociale</div><div class="t" style="left:1588px;top:98px;color:#000;">Cognome Nome</div><div class="a" style="left:1364px;top:114px;width:501px;height:19px;background:#0078d7"></div><div class="a" style="left:1331px;top:114px;width:32px;height:19px;background:#f0f0f0"></div><div class="a" style="left:1331px;top:133px;width:33px;height:1px;background:#a0a0a0"></div><div class="a" style="left:1364px;top:133px;width:501px;height:1px;background:#f4f4f4"></div><div class="a" style="left:1383px;top:114px;width:1px;height:19px;background:#ececec"></div><div class="a" style="left:1583px;top:114px;width:1px;height:19px;background:#ececec"></div><div class="a" style="left:1852px;top:114px;width:1px;height:19px;background:#ececec"></div><div class="a" style="left:1366px;top:116px;width:14px;height:14px;border:1px solid #8e8f8f;background:#eceded"></div><div class="a" style="left:1368px;top:118px;width:10px;height:10px;border-radius:1px;background:linear-gradient(150deg,#b6bdc9 0,#d9dde3 40%,#f3f3f3 75%,#f6f6f6 100%)"></div><div class="t" style="left:1388px;top:118px;color:#fff;letter-spacing:-0.413px;">ELENIA  GIOIA</div><div class="t" style="left:1588px;top:118px;color:#fff;">Rossi Marco</div><div class="a" style="left:1364px;top:134px;width:501px;height:19px;background:#fff"></div><div class="a" style="left:1331px;top:134px;width:32px;height:19px;background:#f0f0f0"></div><div class="a" style="left:1331px;top:153px;width:33px;height:1px;background:#a0a0a0"></div><div class="a" style="left:1364px;top:153px;width:501px;height:1px;background:#ececec"></div><div class="a" style="left:1383px;top:134px;width:1px;height:19px;background:#ececec"></div><div class="a" style="left:1583px;top:134px;width:1px;height:19px;background:#ececec"></div><div class="a" style="left:1852px;top:134px;width:1px;height:19px;background:#ececec"></div><div class="a" style="left:1366px;top:136px;width:14px;height:14px;border:1px solid #8e8f8f;background:#eceded"></div><div class="a" style="left:1368px;top:138px;width:10px;height:10px;border-radius:1px;background:linear-gradient(150deg,#b6bdc9 0,#d9dde3 40%,#f3f3f3 75%,#f6f6f6 100%)"></div><div class="t" style="left:1388px;top:138px;color:#000;letter-spacing:-0.413px;">ELENIA  GIOIA</div><div class="t" style="left:1588px;top:138px;color:#000;">Bianchi Roberta</div><div class="a" style="left:1363px;top:114px;width:1px;height:40px;background:#a0a0a0"></div><div class="a" style="left:1331px;top:154px;width:535px;height:1px;background:#696969"></div><div class="a" style="left:1865px;top:94px;width:1px;height:61px;background:#696969"></div><div class="btn" style="left:1789px;top:603px;width:34px;height:33px"></div><svg class="a" style="left:1789px;top:603px" width="34" height="33" viewBox="0 0 34 33"><path d="M21.5 6.7 L5.8 6.7 L5.8 26.1 L24.8 26.1 L24.8 17.8" fill="none" stroke="#000" stroke-width="1.6"/><path d="M9.4 14.3 L15.6 20.7 L28.2 8.4" fill="none" stroke="#000" stroke-width="4.2"/></svg><div class="btn" style="left:1829px;top:603px;width:34px;height:33px"></div><svg class="a" style="left:1829px;top:603px" width="34" height="33" viewBox="0 0 34 33"><rect x="6.8" y="5.6" width="20.4" height="20.6" rx="1.4" fill="none" stroke="#000" stroke-width="1.6"/></svg><div class="grp" style="left:496px;top:671px;width:825px;height:347px"></div><div class="gt" style="left:504px;top:666px">Invio Messaggio Email</div><div class="a" style="left:515px;top:691px;width:13px;height:13px;border:1px solid #333;background:#fff"></div><svg class="a" style="left:515px;top:691px" width="13" height="13" viewBox="0 0 13 13"><path d="M2.2 6.3 L5 9.1 L10.6 3.4" fill="none" stroke="#3a3a3a" stroke-width="1.15"/></svg><div class="t" style="left:534px;top:692px;color:#000;">Email Aziendale</div><div class="a" style="left:635px;top:691px;width:13px;height:13px;border:1px solid #333;background:#fff"></div><svg class="a" style="left:635px;top:691px" width="13" height="13" viewBox="0 0 13 13"><path d="M2.2 6.3 L5 9.1 L10.6 3.4" fill="none" stroke="#3a3a3a" stroke-width="1.15"/></svg><div class="t" style="left:654px;top:692px;color:#000;">Email Amministrativa</div><div class="t" style="left:518px;top:717px;color:#000;">Oggetto Email</div><div class="tb" style="left:602px;top:713px;width:700px;height:19px"></div><div class="t" style="left:606px;top:717px;color:#000;">Ricontatto per fine Noleggio</div><div class="tb" style="left:515px;top:740px;width:787px;height:203px"></div><div class="a" style="left:1285px;top:741px;width:16px;height:201px;background:#f0f0f0"></div><svg class="a" style="left:1287.8px;top:747.25px" width="9" height="5.5" viewBox="-1 -1 9 5.5"><path d="M0 3.5 L3.5 0 L7 3.5" fill="none" stroke="#bdbdbd" stroke-width="1.8"/></svg><svg class="a" style="left:1287.8px;top:930.25px" width="9" height="5.5" viewBox="-1 -1 9 5.5"><path d="M0 0 L3.5 3.5 L7 0" fill="none" stroke="#bdbdbd" stroke-width="1.7"/></svg><div class="t" style="left:519px;top:744px;color:#000;letter-spacing:0.015px;">Egregio Cliente con la presente la contattiamo per informarla della prossima scadenza noleggio. Prego contattare i nostri uffici</div><div class="t" style="left:519px;top:774px;color:#000;letter-spacing:0.006px;">Ai sensi del Regolamento UE 679472016  si precisa che le informazioni contenute in questo messaggio sono riservate e  ad uso esclusivo</div><div class="t" style="left:519px;top:789px;color:#000;letter-spacing:0.038px;">del destinatario. Qualora il messaggio in parola Le fosse  pervenuto per errore44 La preghiamo di eliminarlo senza copiarlo e di non</div><div class="t" style="left:519px;top:804px;color:#000;letter-spacing:0.061px;">inoltrarlo a terzi44 dandocene gentilmente comunicazione.</div><div class="t" style="left:519px;top:819px;color:#000;letter-spacing:0.001px;">This message44 for the Regulation UE 67947201644 may contain confidential  and47or privileged information. If you are not the addressee</div><div class="t" style="left:519px;top:834px;color:#000;letter-spacing:-0.053px;">or authorized to  receive this for the addressee44 you must not use44 copy44 disclose or take any  action based on this message or any</div><div class="t" style="left:519px;top:849px;color:#000;letter-spacing:-0.028px;">information herein. If you have received  this message in error44 please advise the sender immediately by reply e-mail and  delete this</div><div class="t" style="left:519px;top:864px;color:#000;letter-spacing:-0.030px;">message.</div><div class="btn" style="left:508px;top:963px;width:38px;height:30px"></div><svg class="a" style="left:508px;top:963px" width="38" height="30" viewBox="0 0 38 30"><path d="M8.3 5.6 L18.5 5.6 L19.5 8 L26.5 8 L26.5 24.8 L8.3 24.8 Z" fill="#f2c21a" stroke="#8a5a10" stroke-width="0.8"/><path d="M11.8 10.5 L30.6 10.5 L27.6 25.2 L8.4 25.2 Z" fill="url(#folder)" stroke="#8a5a10" stroke-width="0.8"/><path d="M15.8 4 L21.2 4 L21.2 12.2 L25.6 12.2 L18.6 19 L11.8 12.2 L15.8 12.2 Z" fill="url(#garr)" stroke="#10902a" stroke-width="0.8"/></svg><div class="tb" style="left:553px;top:967px;width:567px;height:20px"></div><div class="btn" style="left:1131px;top:962px;width:38px;height:30px"></div><svg class="a" style="left:1131px;top:962px" width="38" height="30" viewBox="0 0 38 30"><rect x="6" y="8" width="23" height="17" rx="3.4" fill="url(#mon)" stroke="#8a8a8a" stroke-width="0.9"/><rect x="9.0" y="10.7" width="17.0" height="10.5" fill="url(#scr)"/><path d="M12.9 25 L22.1 25 L21.2 27 L13.8 27 Z" fill="#d0d0d0" stroke="#999" stroke-width="0.5"/><g transform="translate(23 13) scale(0.78)"><g transform="rotate(34)"><rect x="-1.8" y="-14.5" width="3.6" height="13" rx="1.8" fill="#d8922e" stroke="#8a5010" stroke-width="0.7"/><circle cx="0" cy="-12" r="0.7" fill="#fff"/></g><g transform="rotate(47)"><rect x="-4.6" y="-2.6" width="9.2" height="2.4" fill="#fff070" stroke="#c8a020" stroke-width="0.5"/><rect x="-5" y="-0.4" width="10" height="2.6" fill="#e01818" stroke="#900" stroke-width="0.5"/><path d="M-5 2.2 L5 2.2 L10 15.5 Q0 18 -10 15.5 Z" fill="url(#bristle)" stroke="#c8a010" stroke-width="0.6"/><path d="M-3 2.8 L-6.5 16 M-1 2.8 L-2.5 17 M1 2.8 L1.8 17 M3 2.8 L6 16.3" stroke="#d8b020" stroke-width="0.7" fill="none"/></g></g></svg><div class="btn" style="left:1189px;top:953px;width:51px;height:44px"></div><svg class="a" style="left:1189px;top:953px" width="51" height="44" viewBox="0 0 51 44"><path d="M30.93 33.17 A12.2 12.2 0 1 1 37.28 24.10" fill="none" stroke="#0a68cc" stroke-width="3.8" stroke-linecap="butt"/><ellipse cx="24.0" cy="23.0" rx="4.60" ry="5.75" fill="none" stroke="#0a68cc" stroke-width="3.8"/><path d="M31.91 15.88 L31.91 24.90 Q32.41 28.54 37.28 24.10" fill="none" stroke="#0a68cc" stroke-width="3.8"/></svg><div class="btn" style="left:1248px;top:953px;width:51px;height:44px"></div><svg class="a" style="left:1248px;top:953px" width="51" height="44" viewBox="0 0 51 44"><rect x="9" y="13" width="30" height="22" rx="4.4" fill="url(#mon)" stroke="#8a8a8a" stroke-width="0.9"/><rect x="12.9" y="16.5" width="22.2" height="13.6" fill="url(#scr)"/><path d="M18.0 35 L30.0 35 L28.8 37 L19.2 37 Z" fill="#d0d0d0" stroke="#999" stroke-width="0.5"/><g transform="translate(30.5 19.5) scale(1.0)"><g transform="rotate(34)"><rect x="-1.8" y="-14.5" width="3.6" height="13" rx="1.8" fill="#d8922e" stroke="#8a5010" stroke-width="0.7"/><circle cx="0" cy="-12" r="0.7" fill="#fff"/></g><g transform="rotate(47)"><rect x="-4.6" y="-2.6" width="9.2" height="2.4" fill="#fff070" stroke="#c8a020" stroke-width="0.5"/><rect x="-5" y="-0.4" width="10" height="2.6" fill="#e01818" stroke="#900" stroke-width="0.5"/><path d="M-5 2.2 L5 2.2 L10 15.5 Q0 18 -10 15.5 Z" fill="url(#bristle)" stroke="#c8a010" stroke-width="0.6"/><path d="M-3 2.8 L-6.5 16 M-1 2.8 L-2.5 17 M1 2.8 L1.8 17 M3 2.8 L6 16.3" stroke="#d8b020" stroke-width="0.7" fill="none"/></g></g></svg><div class="grp" style="left:1343px;top:671px;width:543px;height:295px"></div><div class="gt" style="left:1348px;top:666px">Statistiche Messaggi Inviati</div><div class="a" style="left:1359px;top:686px;width:512px;height:217px;background:#fff;border-style:solid;border-width:1px;border-color:#a0a0a0 #fff #fff #a0a0a0;box-shadow:inset 1px 1px 0 #696969,inset -1px -1px 0 #e3e3e3"></div><div class="a" style="left:1361px;top:688px;width:505px;height:20px;background:#f0f0f0"></div><div class="a" style="left:1361px;top:707px;width:505px;height:1px;background:#a0a0a0"></div><div class="a" style="left:1393px;top:688px;width:1px;height:19px;background:#a0a0a0"></div><div class="a" style="left:1513px;top:688px;width:1px;height:19px;background:#a0a0a0"></div><div class="a" style="left:1559px;top:688px;width:1px;height:19px;background:#a0a0a0"></div><div class="a" style="left:1855px;top:688px;width:1px;height:19px;background:#a0a0a0"></div><div class="t" style="left:1398px;top:692px;color:#000;">Data Ora</div><div class="t" style="left:1518px;top:692px;color:#000;">Tipo</div><div class="t" style="left:1564px;top:692px;color:#000;">Oggetto</div><div class="a" style="left:1394px;top:708px;width:471px;height:19px;background:#0078d7"></div><div class="a" style="left:1361px;top:708px;width:32px;height:19px;background:#f0f0f0"></div><div class="a" style="left:1361px;top:727px;width:33px;height:1px;background:#a0a0a0"></div><div class="a" style="left:1394px;top:727px;width:472px;height:1px;background:#f4f4f4"></div><div class="a" style="left:1513px;top:708px;width:1px;height:19px;background:#ececec"></div><div class="a" style="left:1559px;top:708px;width:1px;height:19px;background:#ececec"></div><div class="a" style="left:1855px;top:708px;width:1px;height:19px;background:#ececec"></div><div class="a" style="left:1865px;top:708px;width:1px;height:19px;background:#fff"></div><div class="t" style="left:1398px;top:712px;color:#fff;">05/07/2024 10:45:47</div><div class="t" style="left:1518px;top:712px;color:#fff;">SMS</div><div class="a" style="left:1394px;top:728px;width:471px;height:19px;background:#fff"></div><div class="a" style="left:1361px;top:728px;width:32px;height:19px;background:#f0f0f0"></div><div class="a" style="left:1361px;top:747px;width:33px;height:1px;background:#a0a0a0"></div><div class="a" style="left:1394px;top:747px;width:472px;height:1px;background:#ececec"></div><div class="a" style="left:1513px;top:728px;width:1px;height:19px;background:#ececec"></div><div class="a" style="left:1559px;top:728px;width:1px;height:19px;background:#ececec"></div><div class="a" style="left:1855px;top:728px;width:1px;height:19px;background:#ececec"></div><div class="a" style="left:1865px;top:728px;width:1px;height:19px;background:#fff"></div><div class="t" style="left:1398px;top:732px;color:#000;">05/07/2024 10:44:01</div><div class="t" style="left:1518px;top:732px;color:#000;">SMS</div><div class="a" style="left:1393px;top:708px;width:1px;height:40px;background:#a0a0a0"></div><div class="a" style="left:1361px;top:748px;width:506px;height:1px;background:#696969"></div><div class="a" style="left:1866px;top:688px;width:1px;height:61px;background:#696969"></div><div class="t" style="left:1475px;top:913px;color:#000;">Da Data</div><div class="t" style="left:1483px;top:938px;color:#000;">A Data</div><div class="tb" style="left:1533px;top:909px;width:152px;height:19px"></div><div class="t" style="left:1537px;top:913px;color:#000;">05/07/2024</div><svg class="a" style="left:1669.5px;top:914.75px" width="11" height="6.5" viewBox="-1 -1 11 6.5"><path d="M0 0 L4.5 4.5 L9 0" fill="none" stroke="#404040" stroke-width="1.0"/></svg><div class="tb" style="left:1533px;top:935px;width:152px;height:19px"></div><div class="t" style="left:1537px;top:939px;color:#000;">21/03/2025</div><svg class="a" style="left:1669.5px;top:940.75px" width="11" height="6.5" viewBox="-1 -1 11 6.5"><path d="M0 0 L4.5 4.5 L9 0" fill="none" stroke="#404040" stroke-width="1.0"/></svg><div class="btn" style="left:1701px;top:909px;width:51px;height:44px"></div><svg class="a" style="left:1701px;top:909px" width="51" height="44" viewBox="0 0 51 44"><g transform="translate(9.5 6.0)"><line x1="3.5" y1="27.5" x2="11" y2="20" stroke="#8a4a10" stroke-width="6.4" stroke-linecap="round"/><line x1="3.5" y1="27.5" x2="11" y2="20" stroke="url(#hand)" stroke-width="5" stroke-linecap="round"/><line x1="11" y1="20" x2="14.918881681795693" y2="16.081118318204307" stroke="#a8b0c0" stroke-width="2.4"/><circle cx="21" cy="10" r="8.6" fill="url(#lens)" stroke="#1c2ed8" stroke-width="1.6"/></g></svg><div class="btn" style="left:1759px;top:909px;width:51px;height:44px"></div><svg class="a" style="left:1759px;top:909px" width="51" height="44" viewBox="0 0 51 44"><g transform="translate(9.5 6.0)"><line x1="28" y1="28" x2="20" y2="19.5" stroke="#8a4a10" stroke-width="5.9" stroke-linecap="round"/><line x1="28" y1="28" x2="20" y2="19.5" stroke="url(#hand)" stroke-width="4.5" stroke-linecap="round"/><line x1="20" y1="19.5" x2="16.35324407365025" y2="15.620472418776862" stroke="#a8b0c0" stroke-width="2.4"/><circle cx="10.6" cy="9.5" r="8.4" fill="url(#lens)" stroke="#1c2ed8" stroke-width="1.6"/><g transform="translate(21.5 13.5) scale(1.0)"><g transform="rotate(32)"><rect x="-1.8" y="-14.5" width="3.6" height="13" rx="1.8" fill="#d8922e" stroke="#8a5010" stroke-width="0.7"/><circle cx="0" cy="-12" r="0.7" fill="#fff"/></g><g transform="rotate(45)"><rect x="-4.6" y="-2.6" width="9.2" height="2.4" fill="#fff070" stroke="#c8a020" stroke-width="0.5"/><rect x="-5" y="-0.4" width="10" height="2.6" fill="#e01818" stroke="#900" stroke-width="0.5"/><path d="M-5 2.2 L5 2.2 L10 15.5 Q0 18 -10 15.5 Z" fill="url(#bristle)" stroke="#c8a010" stroke-width="0.6"/><path d="M-3 2.8 L-6.5 16 M-1 2.8 L-2.5 17 M1 2.8 L1.8 17 M3 2.8 L6 16.3" stroke="#d8b020" stroke-width="0.7" fill="none"/></g></g></g></svg><div class="btn" style="left:1817px;top:909px;width:51px;height:44px"></div><svg class="a" style="left:1817px;top:909px" width="51" height="44" viewBox="0 0 51 44"><g transform="translate(9.5 6.0)"><rect x="2.5" y="2.2" width="23.2" height="23.5" fill="url(#xls)" stroke="#0a5a22" stroke-width="1.5"/><path d="M7.2 6.2 L19.4 21" stroke="#0c7a30" stroke-width="3.4" fill="none"/><path d="M21.2 6.2 L8.8 21" stroke="#0c7a30" stroke-width="1.9" fill="none"/><path d="M4.8 6.2 L10 6.2 M18.2 6.2 L23.6 6.2 M5.6 21 L11 21 M16.6 21 L22 21" stroke="#0c7a30" stroke-width="1.6" fill="none"/><path d="M10.6 12.8 C9 21.5 15 24.6 21 23.6 L21 16.6 L30.2 23.6 L21 30.6 L21 27.6 C13 28.8 7.2 22 10.6 12.8 Z" fill="url(#redarr)" stroke="#b00010" stroke-width="0.7"/><path d="M11 15.5 C10.6 21 15 23.2 20 22.6" fill="none" stroke="#ffd0d0" stroke-width="0.9" opacity="0.8"/></g></svg><div class="btn" style="left:1777px;top:973px;width:51px;height:44px"></div><svg class="a" style="left:1777px;top:973px" width="51" height="44" viewBox="0 0 51 44"><path d="M25 10.2 C33 10.2 39.8 15 39.8 21 C39.8 27 33 31.8 25 31.8 C22 31.8 19.5 31.3 17 30.5 L11.5 33.6 L14.2 28.8 C11.6 26.8 10.2 24 10.2 21 C10.2 15 17 10.2 25 10.2 Z" fill="url(#bub)" stroke="#6030e0" stroke-width="1"/><text x="24.8" y="27.6" text-anchor="middle" font-family="Liberation Sans" font-weight="bold" font-size="19" fill="#000">?</text></svg><div class="btn" style="left:1834px;top:973px;width:51px;height:44px"></div><svg class="a" style="left:1834px;top:973px" width="51" height="44" viewBox="0 0 51 44"><rect x="12" y="9" width="26.5" height="26" rx="6" fill="url(#pwr)"/><circle cx="25.2" cy="21.8" r="7.9" fill="none" stroke="#fff" stroke-width="2"/><rect x="24" y="17.5" width="2.6" height="9.6" fill="#fff"/></svg><div class="btn" style="left:289px;top:974px;width:38px;height:30px"></div><svg class="a" style="left:289px;top:974px" width="38" height="30" viewBox="0 0 38 30"><path d="M20.16 20.26 A8.0 8.0 0 1 1 24.32 14.31" fill="none" stroke="#0c0c58" stroke-width="2.4" stroke-linecap="butt"/><ellipse cx="15.2" cy="13.799999999999999" rx="3.31" ry="4.14" fill="none" stroke="#0c0c58" stroke-width="2.4"/><path d="M21.08 8.64 L21.08 15.00 Q21.58 17.52 24.32 14.31" fill="none" stroke="#0c0c58" stroke-width="2.4"/><circle cx="18.6" cy="17" r="4.8" fill="url(#lens)" stroke="#5878e8" stroke-width="1" opacity="0.95"/><line x1="29" y1="24.5" x2="23.2" y2="20.2" stroke="#8a4a10" stroke-width="4.6" stroke-linecap="round"/><line x1="29" y1="24.5" x2="23.2" y2="20.2" stroke="url(#hand)" stroke-width="3.4" stroke-linecap="round"/></svg><div class="btn" style="left:331px;top:974px;width:38px;height:30px"></div><svg class="a" style="left:331px;top:974px" width="38" height="30" viewBox="0 0 38 30"><ellipse cx="17.2" cy="10.8" rx="9.6" ry="7.2" fill="#1a8cff"/><path d="M11 15 L8.6 21.6 L15 17 Z" fill="#1a8cff"/><text x="17.2" y="14.2" text-anchor="middle" font-family="Liberation Sans" font-weight="bold" font-size="8.6" fill="#000">SMS</text><circle cx="18.5" cy="17.5" r="4.8" fill="url(#lens)" stroke="#5878e8" stroke-width="1"/><line x1="29" y1="24.5" x2="23.2" y2="20.5" stroke="#8a4a10" stroke-width="4.6" stroke-linecap="round"/><line x1="29" y1="24.5" x2="23.2" y2="20.5" stroke="url(#hand)" stroke-width="3.4" stroke-linecap="round"/></svg><div class="btn" style="left:372px;top:974px;width:38px;height:30px"></div><svg class="a" style="left:372px;top:974px" width="38" height="30" viewBox="0 0 38 30"><line x1="29.5" y1="24.5" x2="24" y2="18.5" stroke="#8a4a10" stroke-width="4.6" stroke-linecap="round"/><line x1="29.5" y1="24.5" x2="24" y2="18.5" stroke="url(#hand)" stroke-width="3.2" stroke-linecap="round"/><line x1="24" y1="18.5" x2="19.940403341632248" y2="14.829088128071712" stroke="#a8b0c0" stroke-width="2.4"/><circle cx="14.6" cy="10" r="7.2" fill="url(#lens)" stroke="#1c2ed8" stroke-width="1.6"/><g transform="translate(22.6 12.8) scale(0.74)"><g transform="rotate(34)"><rect x="-1.8" y="-14.5" width="3.6" height="13" rx="1.8" fill="#d8922e" stroke="#8a5010" stroke-width="0.7"/><circle cx="0" cy="-12" r="0.7" fill="#fff"/></g><g transform="rotate(47)"><rect x="-4.6" y="-2.6" width="9.2" height="2.4" fill="#fff070" stroke="#c8a020" stroke-width="0.5"/><rect x="-5" y="-0.4" width="10" height="2.6" fill="#e01818" stroke="#900" stroke-width="0.5"/><path d="M-5 2.2 L5 2.2 L10 15.5 Q0 18 -10 15.5 Z" fill="url(#bristle)" stroke="#c8a010" stroke-width="0.6"/><path d="M-3 2.8 L-6.5 16 M-1 2.8 L-2.5 17 M1 2.8 L1.8 17 M3 2.8 L6 16.3" stroke="#d8b020" stroke-width="0.7" fill="none"/></g></g></svg><div class="btn" style="left:414px;top:974px;width:38px;height:30px"></div><svg class="a" style="left:414px;top:974px" width="38" height="30" viewBox="0 0 38 30"><rect x="8.5" y="4.5" width="21" height="21" rx="1" fill="#e4f0fc" stroke="#1a7a30" stroke-width="1"/><rect x="8.5" y="4.5" width="21" height="4.4" fill="#5ccc3c" stroke="#1a7a30" stroke-width="1"/><line x1="8.5" y1="13.8" x2="29.5" y2="13.8" stroke="#2a8a48" stroke-width="1"/><line x1="8.5" y1="19.2" x2="29.5" y2="19.2" stroke="#2a8a48" stroke-width="1"/><line x1="15.6" y1="4.5" x2="15.6" y2="25.5" stroke="#1a7a30" stroke-width="1"/><line x1="22.6" y1="4.5" x2="22.6" y2="25.5" stroke="#1a7a30" stroke-width="1"/><line x1="8.5" y1="25" x2="29.5" y2="25" stroke="#0a6a20" stroke-width="1.4"/></svg></body></html>
